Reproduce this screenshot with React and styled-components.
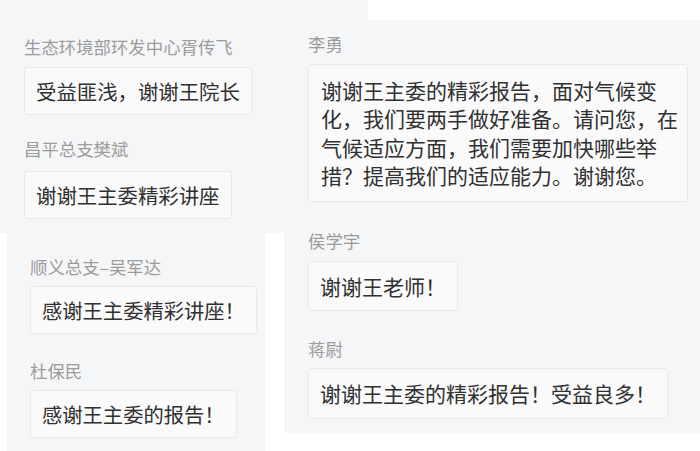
import React from "react";
import styled, { createGlobalStyle } from "styled-components";

const Global = createGlobalStyle`
  html, body { margin: 0; padding: 0; background: #ffffff; }
  body { font-family: "Noto Sans CJK SC", "Noto Sans", sans-serif; }
`;

const Page = styled.div`
  width: 700px;
  height: 451px;
  display: flex;
  align-items: flex-start;
  background: #ffffff;
  overflow: hidden;
`;

const Column = styled.div`
  width: ${(p) => p.$width}px;
  display: flex;
  flex-direction: column;
`;

const Panel = styled.div`
  box-sizing: border-box;
  width: ${(p) => p.$width}px;
  height: ${(p) => p.$height}px;
  margin-left: ${(p) => p.$offset || 0}px;
  padding: ${(p) => p.$pad};
  background: #f5f6f8;
  display: flex;
  flex-direction: column;
  align-items: flex-start;
`;

const WhiteTab = styled.div`
  align-self: flex-end;
  width: 332px;
  height: 20px;
  background: #ffffff;
`;

const Message = styled.div`
  display: flex;
  flex-direction: column;
  align-items: flex-start;
  gap: ${(p) => p.$gap}px;
  margin-top: ${(p) => p.$top || 0}px;
`;

const Name = styled.div`
  font-size: 17.4px;
  line-height: 24px;
  color: #9c9c9c;
  white-space: nowrap;
`;

const Bubble = styled.div`
  box-sizing: border-box;
  width: ${(p) => (p.$width ? `${p.$width}px` : "auto")};
  padding: ${(p) => p.$pad || "9px 11px"};
  font-size: ${(p) => p.$size || 20.4}px;
  line-height: ${(p) => p.$lh || 28}px;
  color: #303030;
  background: #fafafb;
  border: 1px solid #e7e9ec;
  border-radius: 3px;
  white-space: ${(p) => (p.$width ? "normal" : "nowrap")};
  line-break: strict;
`;

export default function App() {
  return (
    <>
      <Global />
      <Page>
        <Column $width={284}>
          <Panel $width={284} $height={233} $pad="35px 0 0 24px">
            <Message $gap={8}>
              <Name>生态环境部环发中心胥传飞</Name>
              <Bubble>受益匪浅，谢谢王院长</Bubble>
            </Message>
            <Message $gap={10} $top={22}>
              <Name>昌平总支樊斌</Name>
              <Bubble>谢谢王主委精彩讲座</Bubble>
            </Message>
          </Panel>
          <Panel $width={258} $height={218} $offset={7} $pad="22px 0 0 23px">
            <Message $gap={7}>
              <Name>顺义总支–吴军达</Name>
              <Bubble $size={20.3}>感谢王主委精彩讲座！</Bubble>
            </Message>
            <Message $gap={7} $top={25}>
              <Name>杜保民</Name>
              <Bubble $size={20.3}>感谢王主委的报告！</Bubble>
            </Message>
          </Panel>
        </Column>
        <Column $width={416}>
          <Panel $width={416} $height={433} $pad="0 0 0 24px">
            <WhiteTab />
            <Message $gap={8} $top={12}>
              <Name>李勇</Name>
              <Bubble $width={380} $size={21} $lh={28.3} $pad="11px 6px 12px 12px">
                谢谢王主委的精彩报告，面对气候变化，我们要两手做好准备。请问您，在气候适应方面，我们需要加快哪些举措？提高我们的适应能力。谢谢您。
              </Bubble>
            </Message>
            <Message $gap={8} $top={27}>
              <Name>侯学宇</Name>
              <Bubble $size={21} $lh={28.3} $pad="10px 11px">谢谢王老师！</Bubble>
            </Message>
            <Message $gap={7} $top={26}>
              <Name>蒋尉</Name>
              <Bubble $size={21} $lh={28.3} $pad="10px 11px">谢谢王主委的精彩报告！受益良多！</Bubble>
            </Message>
          </Panel>
        </Column>
      </Page>
    </>
  );
}
